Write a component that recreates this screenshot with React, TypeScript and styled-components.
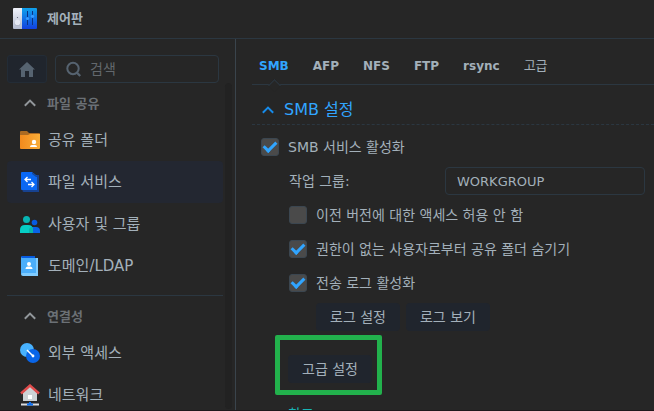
import React, { useState } from "react";
import styled, { createGlobalStyle, css } from "styled-components";

const color = {
  bg: "#262626",
  line: "#2b3741",
  text: "#a3b0ba",
  muted: "#6b7075",
  blue: "#31a5ff",
  button: "#20252d",
  selected: "#232731",
};

const Global = createGlobalStyle`
  *, *::before, *::after { box-sizing: border-box; }
  html, body { margin: 0; background: ${color.bg}; }
  body, button, input {
    font-family: "DejaVu Sans", "Noto Sans CJK KR", sans-serif;
    font-size: 14px;
    color: ${color.text};
  }
`;

const Window = styled.div`
  display: flex;
  flex-direction: column;
  height: 100vh;
  overflow: hidden;
  background: ${color.bg};
  border-bottom: 1px solid #1f181c;
`;

const TitleBar = styled.header`
  display: flex;
  align-items: center;
  gap: 10px;
  flex: none;
  height: 39px;
  padding: 0 13px;
  border-bottom: 1px solid ${color.line};
`;

const WindowTitle = styled.h1`
  margin: 0;
  font-size: 13px;
  line-height: 20px;
  font-weight: 700;
`;

const Body = styled.div`
  display: flex;
  flex: 1;
  min-height: 0;
`;

const Sidebar = styled.aside`
  display: flex;
  flex-direction: column;
  flex: none;
  width: 236px;
  padding: 16px 3px 0 7px;
  border-right: 1px solid #3a444c;
  overflow: hidden;
`;

const SearchRow = styled.div`
  display: flex;
  gap: 8px;
  flex: none;
  padding-right: 13px;
`;

const HomeButton = styled.button`
  display: grid;
  place-items: center;
  width: 40px;
  height: 28px;
  padding: 0;
  color: #566370;
  background: ${color.button};
  border: 1px solid #232c36;
  border-radius: 3px;
`;

const SearchBox = styled.label`
  display: flex;
  align-items: center;
  gap: 8px;
  flex: 1;
  min-width: 0;
  height: 28px;
  padding: 0 8px 0 10px;
  color: #566370;
  border: 1px solid ${color.line};
  border-radius: 4px;
`;

const SearchInput = styled.input`
  flex: 1;
  min-width: 0;
  padding: 0;
  background: none;
  border: 0;
  outline: 0;
  &::placeholder { color: #63686d; opacity: 1; }
`;

const NavScroll = styled.div`
  display: flex;
  flex: 1;
  gap: 2px;
  min-height: 0;
  overflow: hidden;
`;

const Nav = styled.nav`
  flex: 1;
  min-width: 0;
`;

const ScrollTrack = styled.div`
  flex: none;
  width: 7px;
  margin-bottom: 1px;
  border-radius: 4px;
  background: #222222;
`;

const NavSection = styled.section`
  & + & {
    margin-top: 8px;
    border-top: 1px solid ${color.line};
  }
`;

const SectionToggle = styled.button`
  display: flex;
  align-items: center;
  gap: 10px;
  width: 100%;
  height: 36px;
  padding: 3px 0 0 16px;
  font-size: 13px;
  font-weight: 700;
  color: ${color.muted};
  background: none;
  border: 0;
`;

const NavLink = styled.a<{ $active?: boolean }>`
  display: flex;
  align-items: center;
  gap: 8px;
  height: 42px;
  padding: 0 13px;
  font-size: 15px;
  line-height: 22px;
  color: ${color.text};
  text-decoration: none;
  border-radius: 4px;
  ${(p) => p.$active && css`background: ${color.selected};`}
`;

const Main = styled.main`
  flex: 1;
  min-width: 0;
  padding-left: 16px;
  overflow: hidden;
`;

const TabBar = styled.div`
  display: flex;
  gap: 24px;
  height: 46px;
  padding: 8px 0 0 7px;
  border-bottom: 1px solid ${color.line};
`;

const Tab = styled.button<{ $active: boolean; $korean: boolean }>`
  position: relative;
  padding: 0 0 ${(p) => (p.$korean ? 2 : 0)}px;
  background: none;
  border: 0;
  font-size: ${(p) => (p.$korean ? 13 : 12)}px;
  font-weight: ${(p) => (p.$korean ? 400 : 700)};
  color: ${(p) => (p.$active ? color.blue : color.text)};
  ${(p) => p.$active && css`
    &::after {
      content: "";
      position: absolute;
      left: 50%;
      bottom: -6px;
      width: 9px;
      height: 9px;
      margin-left: -4px;
      background: ${color.bg};
      border: solid ${color.line};
      border-width: 1px 0 0 1px;
      transform: rotate(45deg);
    }
  `}
`;

const GroupTitle = styled.button`
  display: flex;
  align-items: center;
  gap: 9px;
  width: 100%;
  height: 40px;
  padding: 10px 0 0 9px;
  font-size: 16px;
  line-height: 24px;
  color: ${color.blue};
  background: none;
  border: 0;
  border-bottom: 1px dashed ${color.line};
`;

const Form = styled.form`
  display: flex;
  flex-direction: column;
  padding: 5px 9px 0;
`;

const Row = styled.div<{ $level: number }>`
  display: flex;
  align-items: center;
  gap: 6px;
  min-height: 34px;
  padding-left: ${(p) => [0, 28, 55][p.$level]}px;
`;

const CheckLabel = styled.label`
  display: flex;
  align-items: center;
  gap: 9px;
  line-height: 20px;
`;

const Check = styled.input`
  display: grid;
  justify-content: center;
  flex: none;
  width: 18px;
  height: 18px;
  margin: 0;
  appearance: none;
  background: #4a4a4a;
  border: 1px solid #3b4650;
  border-radius: 3px;
  &:checked::after {
    content: "";
    width: 8px;
    height: 13px;
    border: solid ${color.blue};
    border-width: 0 3px 3px 0;
    transform: rotate(45deg);
  }
`;

const FieldLabel = styled.label`
  flex: 1;
  line-height: 20px;
`;

const TextField = styled.input`
  width: 200px;
  height: 28px;
  padding: 0 11px;
  font-size: 13px;
  background: none;
  border: 1px solid ${color.line};
  border-radius: 4px;
`;

const Button = styled.button`
  height: 28px;
  padding: 0 14px;
  line-height: 20px;
  background: ${color.button};
  border: 0;
  border-radius: 4px;
`;

const Highlight = styled.div`
  align-self: flex-start;
  margin: 1px 0 0 14px;
  padding: 15px 5px 7px 8px;
  border: 5px solid #22b14c;
  border-radius: 2px;
`;

const Note = styled.p`
  margin: 9px 0 0;
  padding-left: 27px;
  line-height: 20px;
  color: #18b5b5;
`;

const Chevron = ({ stroke }: { stroke: string }) => (
  <svg width="14" height="14" viewBox="0 0 14 14" fill="none" stroke={stroke} strokeWidth="2" aria-hidden="true">
    <path d="M1.8 9.7 7 4.6l5.2 5.1" />
  </svg>
);

const PanelLogo = () => (
  <svg width="24" height="22" viewBox="0 0 24 22" aria-hidden="true">
    <defs>
      <linearGradient id="panelWhite" x2="0" y2="1"><stop stopColor="#f0f3fb" /><stop offset="1" stopColor="#b4bbcf" /></linearGradient>
      <linearGradient id="panelBlue" x2="0" y2="1"><stop stopColor="#10a2ec" /><stop offset="1" stopColor="#1240df" /></linearGradient>
    </defs>
    <path d="M1 0h8v21H1a1 1 0 0 1-1-1V1a1 1 0 0 1 1-1Z" fill="url(#panelWhite)" />
    <path d="M9 0h14a1 1 0 0 1 1 1v19a1 1 0 0 1-1 1H9Z" fill="url(#panelBlue)" />
    <circle cx="4.5" cy="15" r="3" fill="#a1a7ba" />
    <circle cx="4.5" cy="14.4" r="2.8" fill="#e4e8f2" />
    <circle cx="4.5" cy="9.5" r=".6" fill="#596078" />
    <path d="M14.5 3v14M19.5 3v14" stroke="#0b3182" />
    <circle cx="14.5" cy="10.5" r="1.6" fill="#379bff" />
    <circle cx="19.5" cy="8.3" r="1.6" fill="#379bff" />
  </svg>
);

const HomeIcon = () => (
  <svg width="16" height="15" viewBox="0 0 16 15" fill="currentColor" aria-hidden="true">
    <path d="M8 0 0 7.5h2V15h4V9h4v6h4V7.5h2Z" />
  </svg>
);

const SearchIcon = () => (
  <svg width="16" height="16" viewBox="0 0 16 16" fill="none" stroke="currentColor" strokeWidth="2" aria-hidden="true">
    <circle cx="7" cy="7.5" r="5.7" />
    <path d="m10.7 11.5 3.5 3.5" strokeWidth="2.4" />
  </svg>
);

const FolderIcon = () => (
  <svg width="20" height="20" viewBox="0 0 20 20" aria-hidden="true">
    <defs><linearGradient id="folder"><stop stopColor="#f28a1d" /><stop offset="1" stopColor="#f9ad38" /></linearGradient></defs>
    <path d="M0 2q0-1 1-1h6l2 2h10q1 0 1 1v5H0Z" fill="#ab6a22" />
    <path d="M0 5h8l2-1h10v14q0 1-1 1H1q-1 0-1-1Z" fill="url(#folder)" />
    <circle cx="14" cy="12" r="2.2" fill="#fff" />
    <path d="M10 17q0-2 2-2h3q2 0 2 2Z" fill="#fff" />
  </svg>
);

const FileServiceIcon = () => (
  <svg width="20" height="20" viewBox="0 0 20 20" aria-hidden="true">
    <path d="M4 3h15v17H4q-1.500 0-1.500-1.500Z" fill="#174290" />
    <path d="M1 1q0-1 1-1h10l5 4v14H2q-1 0-1-1Z" fill="#0a68f4" />
    <path d="M12 0v2l4 3h1V4Z" fill="#14499f" />
    <path d="M5 7.500h6M7.500 5 5 7.500 7.500 10M8 12.500h6M11.500 10l2.500 2.500-2.500 2.500" fill="none" stroke="#fff" strokeWidth="1.300" />
  </svg>
);

const UsersIcon = () => (
  <svg width="20" height="20" viewBox="0 0 20 20" aria-hidden="true">
    <circle cx="14.500" cy="8.500" r="2.800" fill="#075be0" />
    <path d="M9 19v-3q1-3 4-3h3q4 0 4 4v2Z" fill="#0964e8" />
    <circle cx="6.500" cy="5.500" r="3.500" fill="#08b5b4" />
    <path d="M0 19v-3q0-5 5-5h3q5 0 5 5v3Z" fill="#06cec5" />
    <path d="M9 19v-4q1-2 3-2 1 1 1 3v3Z" fill="#08b5ac" />
  </svg>
);

const DirectoryIcon = () => (
  <svg width="20" height="20" viewBox="0 0 20 20" aria-hidden="true">
    <path d="M1 1q0-1 1-1h13v4H1Z" fill="#075be0" />
    <path d="M2 2h16v18H3q-2 0-2-2V1q0 1 1 1Z" fill="#80ccff" />
    <path d="M1 2h15v15H3q-1 0-2 1Z" fill="#4baefa" />
    <circle cx="9" cy="8" r="2" fill="#fff" />
    <path d="M5.500 13q0-2.500 2.500-2.500h2q2.500 0 2.500 2.500Z" fill="#fff" />
  </svg>
);

const AccessIcon = () => (
  <svg width="20" height="20" viewBox="0 0 20 20" aria-hidden="true">
    <circle cx="7" cy="7" r="7" fill="#48b2ff" />
    <circle cx="13" cy="13" r="7" fill="#0965e8" />
    <path d="m7 7 6 6" stroke="#fff" strokeWidth="1.500" />
    <circle cx="13" cy="13" r="1.400" fill="#fff" />
  </svg>
);

const NetworkIcon = () => (
  <svg width="20" height="22" viewBox="0 0 20 22" aria-hidden="true">
    <path d="M3 8.500 10 2l7 6.500V17H3Z" fill="#cdd2d5" />
    <path d="M1 9.500 10 1.500l9 8" fill="none" stroke="#df4c4c" strokeWidth="2.400" />
    <rect x="8" y="11" width="4" height="4" fill="#fff" />
    <path d="M1 20.500h18" stroke="#dadde0" strokeWidth="2" />
    <path d="M9 18h2v1.500h2v2H7v-2h2Z" fill="#096ff4" />
  </svg>
);

const sections = [
  {
    title: "파일 공유",
    items: [
      { label: "공유 폴더", Icon: FolderIcon },
      { label: "파일 서비스", Icon: FileServiceIcon, active: true },
      { label: "사용자 및 그룹", Icon: UsersIcon },
      { label: "도메인/LDAP", Icon: DirectoryIcon },
    ],
  },
  {
    title: "연결성",
    items: [
      { label: "외부 액세스", Icon: AccessIcon },
      { label: "네트워크", Icon: NetworkIcon },
    ],
  },
];

const tabs = ["SMB", "AFP", "NFS", "FTP", "rsync", "고급"];

function CheckRow({ label, level, on = false }: { label: string; level: number; on?: boolean }) {
  return (
    <Row $level={level}>
      <CheckLabel>
        <Check type="checkbox" defaultChecked={on} />
        {label}
      </CheckLabel>
    </Row>
  );
}

export default function App() {
  const [tab, setTab] = useState("SMB");
  return (
    <>
      <Global />
      <Window>
        <TitleBar>
          <PanelLogo />
          <WindowTitle>제어판</WindowTitle>
        </TitleBar>
        <Body>
          <Sidebar>
            <SearchRow>
              <HomeButton type="button" aria-label="홈"><HomeIcon /></HomeButton>
              <SearchBox>
                <SearchIcon />
                <SearchInput type="search" placeholder="검색" aria-label="검색" />
              </SearchBox>
            </SearchRow>
            <NavScroll>
              <Nav>
                {sections.map((s) => (
                  <NavSection key={s.title}>
                    <SectionToggle type="button" aria-expanded="true">
                      <Chevron stroke="#92979b" />
                      {s.title}
                    </SectionToggle>
                    {s.items.map(({ label, Icon, active }: { label: string; Icon: React.FC; active?: boolean }) => (
                      <NavLink key={label} href="#" $active={active} aria-current={active ? "page" : undefined}>
                        <Icon />
                        {label}
                      </NavLink>
                    ))}
                  </NavSection>
                ))}
              </Nav>
              <ScrollTrack />
            </NavScroll>
          </Sidebar>
          <Main>
            <TabBar role="tablist">
              {tabs.map((t) => (
                <Tab
                  key={t}
                  type="button"
                  role="tab"
                  aria-selected={t === tab}
                  $active={t === tab}
                  $korean={t === "고급"}
                  onClick={() => setTab(t)}
                >
                  {t}
                </Tab>
              ))}
            </TabBar>
            <GroupTitle type="button" aria-expanded="true">
              <Chevron stroke="#168bea" />
              SMB 설정
            </GroupTitle>
            <Form onSubmit={(e) => e.preventDefault()}>
              <CheckRow label="SMB 서비스 활성화" level={0} on />
              <Row $level={1}>
                <FieldLabel htmlFor="workgroup">작업 그룹:</FieldLabel>
                <TextField id="workgroup" type="text" defaultValue="WORKGROUP" />
              </Row>
              <CheckRow label="이전 버전에 대한 액세스 허용 안 함" level={1} />
              <CheckRow label="권한이 없는 사용자로부터 공유 폴더 숨기기" level={1} on />
              <CheckRow label="전송 로그 활성화" level={1} on />
              <Row $level={2}>
                <Button type="button">로그 설정</Button>
                <Button type="button">로그 보기</Button>
              </Row>
              <Highlight>
                <Button type="button">고급 설정</Button>
              </Highlight>
              <Note>참고:</Note>
            </Form>
          </Main>
        </Body>
      </Window>
    </>
  );
}
